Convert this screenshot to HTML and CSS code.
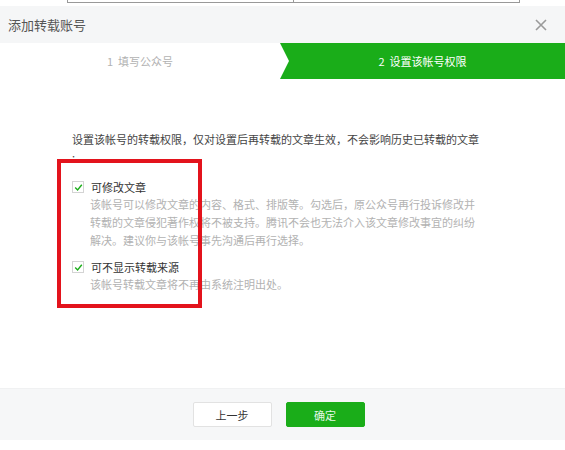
FILE: index.html
```html
<!DOCTYPE html>
<html lang="zh-CN">
<head>
    <meta charset="UTF-8">
    <title>添加转载账号</title>
    <link rel="stylesheet" href="styles.css">
</head>
<body>
    <div class="ghost">
        <div class="ghost-cell"></div>
        <div class="ghost-cell"></div>
    </div>

    <div class="dialog">
        <div class="dialog-hd">
            <h3 class="dialog-title">添加转载账号</h3>
            <svg class="close" width="12" height="12" viewBox="0 0 12 12">
                <path d="M1 1 L11 11 M11 1 L1 11" stroke="#9a9a9a" stroke-width="1.6" fill="none"/>
            </svg>
        </div>

        <div class="steps">
            <div class="step">1&nbsp; 填写公众号</div>
            <div class="step current">2&nbsp; 设置该帐号权限</div>
        </div>

        <div class="dialog-bd">
            <p class="intro">设置该帐号的转载权限，仅对设置后再转载的文章生效，不会影响历史已转载的文章<br>:</p>

            <div class="option">
                <label class="option-label">
                    <span class="checkbox">
                        <svg width="9" height="9" viewBox="0 0 9 9"><path d="M1.2 4.6 L3.6 7 L7.8 1.8" stroke="#1aad19" stroke-width="1.4" fill="none"/></svg>
                    </span>
                    可修改文章
                </label>
                <p class="option-desc">该帐号可以修改文章的内容、格式、排版等。勾选后，原公众号再行投诉修改并<br>转载的文章侵犯著作权将不被支持。腾讯不会也无法介入该文章修改事宜的纠纷<br>解决。建议你与该帐号事先沟通后再行选择。</p>
            </div>

            <div class="option">
                <label class="option-label">
                    <span class="checkbox">
                        <svg width="9" height="9" viewBox="0 0 9 9"><path d="M1.2 4.6 L3.6 7 L7.8 1.8" stroke="#1aad19" stroke-width="1.4" fill="none"/></svg>
                    </span>
                    可不显示转载来源
                </label>
                <p class="option-desc">该帐号转载文章将不再由系统注明出处。</p>
            </div>

            <div class="mark"></div>
        </div>

        <div class="dialog-ft">
            <button class="btn btn-default">上一步</button>
            <button class="btn btn-primary">确定</button>
        </div>
    </div>
</body>
</html>
```

FILE: styles.css
```css
body {
    margin: 0;
    background-color: #fff;
    font-family: "Noto Sans CJK SC", "Noto Sans", sans-serif;
    color: #333;
}
.ghost {
    display: flex;
    height: 6px;
    padding-left: 67px;
}
.ghost-cell {
    width: 225px;
    height: 2px;
    border-left: 1px solid #999;
    border-bottom: 1px solid #999;
}
.ghost-cell:last-child {
    border-right: 1px solid #999;
}
.dialog-hd {
    display: flex;
    align-items: center;
    justify-content: space-between;
    height: 37px;
    padding: 0 18px 0 8px;
    background-color: #f5f6f7;
}
.dialog-title {
    margin: 0;
    font-size: 13px;
    font-weight: normal;
    color: #555;
}
.steps {
    display: flex;
    height: 36px;
    line-height: 36px;
    font-size: 11px;
}
.step {
    width: 280px;
    text-align: center;
    color: #b2b2b2;
    background-color: #fff;
}
.step.current {
    flex: 1;
    color: #fff;
    background-color: #1aad19;
    clip-path: polygon(0 0, 100% 0, 100% 100%, 0 100%, 9px 50%);
}
.dialog-bd {
    position: relative;
    height: 309px;
    box-sizing: border-box;
    padding: 51px 0 0 72px;
    font-size: 11px;
}
.intro {
    margin: 0 0 13px;
    line-height: 18px;
    color: #444;
}
.option {
    margin-bottom: 10px;
}
.option-label {
    display: flex;
    align-items: center;
    height: 16px;
    color: #333;
}
.checkbox {
    display: flex;
    align-items: center;
    justify-content: center;
    width: 10px;
    height: 10px;
    margin-right: 7px;
    border: 1px solid #d4d4d4;
    background-color: #fff;
}
.option-desc {
    margin: 0 0 0 18px;
    line-height: 18px;
    color: #b2b2b2;
}
.mark {
    position: absolute;
    left: 57px;
    top: 80px;
    width: 137px;
    height: 141px;
    border: 4px solid #e3131c;
}
.dialog-ft {
    display: flex;
    justify-content: center;
    gap: 14px;
    height: 52px;
    box-sizing: border-box;
    padding: 13px 8px 0 0;
    background-color: #f6f7f8;
    border-top: 1px solid #f0f1f2;
}
.btn {
    width: 79px;
    height: 25px;
    border-radius: 2px;
    font-family: inherit;
    font-size: 11px;
}
.btn-default {
    border: 1px solid #e2e2e2;
    background-color: #fff;
    color: #333;
}
.btn-primary {
    border: 1px solid #1aad19;
    background-color: #1aad19;
    color: #e6f8e6;
}
```
